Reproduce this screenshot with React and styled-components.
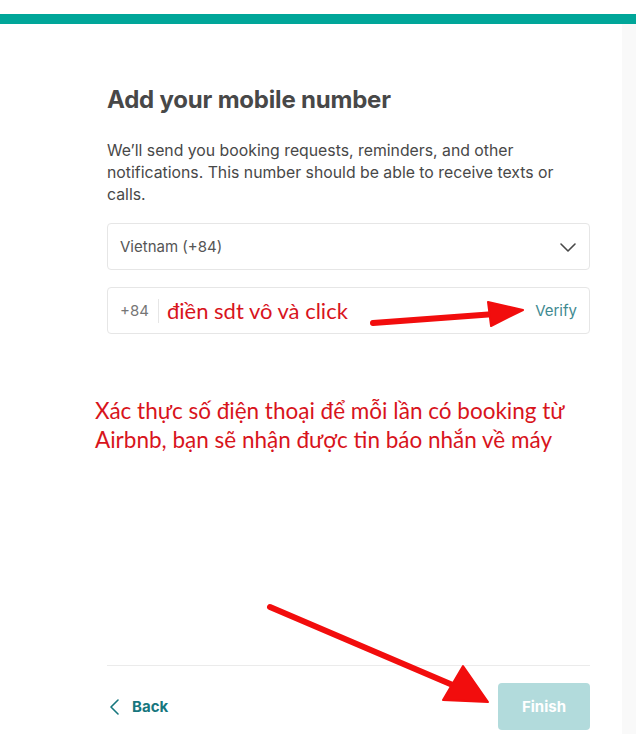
import React from 'react';
import styled, { createGlobalStyle } from 'styled-components';

const GlobalStyle = createGlobalStyle`
  html, body {
    margin: 0;
    padding: 0;
    background: #fff;
  }
  body {
    font-family: "Inter", "Noto Sans", sans-serif;
    color: #484848;
  }
`;

const Page = styled.div`
  position: relative;
  height: 734px;
  overflow: hidden;
  display: flex;
  flex-direction: column;
  padding-top: 14px;
  box-sizing: border-box;
`;

const TopBar = styled.div`
  height: 10px;
  background: #00a699;
  flex-shrink: 0;
`;

const Body = styled.div`
  flex: 1;
  display: flex;
`;

const Main = styled.main`
  flex: 1;
  display: flex;
  flex-direction: column;
  padding: 0 32px 0 107px;
`;

const SideStrip = styled.aside`
  width: 14px;
  background: #f9f9f9;
`;

const Title = styled.h1`
  margin: 62px 0 0;
  font-size: 24px;
  line-height: 28px;
  font-weight: 700;
  color: #484848;
  letter-spacing: -0.2px;
`;

const Lead = styled.p`
  margin: 26px 0 0;
  font-size: 15.8px;
  line-height: 22px;
  color: #484848;
  max-width: 470px;
`;

const Field = styled.div`
  margin-top: ${p => p.$gap}px;
  height: 47px;
  box-sizing: border-box;
  border: 1px solid #e6e6e6;
  border-radius: 4px;
  display: flex;
  align-items: center;
  padding: 0 12px;
`;

const SelectText = styled.span`
  flex: 1;
  font-size: 15px;
  color: #555;
`;

const Prefix = styled.span`
  font-size: 15px;
  color: #767676;
  padding-right: 9px;
  border-right: 1px solid #e6e6e6;
  line-height: 24px;
`;

const NoteInline = styled.span`
  flex: 1;
  padding-left: 8px;
  font-family: "Lato", "Noto Sans", sans-serif;
  font-size: 22px;
  color: #d8141c;
`;

const Verify = styled.span`
  font-size: 15px;
  color: #3f8a91;
`;

const Spacer = styled.div`
  flex: 1;
`;

const Divider = styled.hr`
  margin: 0;
  border: 0;
  border-top: 1px solid #ebebeb;
`;

const Footer = styled.footer`
  display: flex;
  align-items: center;
  justify-content: space-between;
  padding: 17px 0 4px;
`;

const BackLink = styled.a`
  display: flex;
  align-items: center;
  gap: 12px;
  padding-left: 3px;
  font-size: 15px;
  font-weight: 700;
  color: #17777e;
  text-decoration: none;
`;

const FinishButton = styled.button`
  width: 92px;
  height: 47px;
  border: 0;
  border-radius: 4px;
  background: #b2dbdc;
  color: #fff;
  font-family: inherit;
  font-size: 15px;
  font-weight: 700;
`;

const Annotation = styled.p`
  position: absolute;
  left: 95px;
  top: 396px;
  margin: 0;
  white-space: nowrap;
  font-family: "Lato", "Noto Sans", sans-serif;
  font-size: 22.5px;
  line-height: 29px;
  color: #d8141c;
`;

const Arrows = styled.svg`
  position: absolute;
  left: 0;
  top: 0;
  pointer-events: none;
`;

const Chevron = ({ size = 18 }) => (
  <svg width={size} height={size} viewBox="0 0 18 18" fill="none" stroke="#484848" strokeWidth="1.6" strokeLinecap="round" strokeLinejoin="round">
    <path d="M2 6l7 7 7-7" />
  </svg>
);

export default function App() {
  return (
    <>
      <GlobalStyle />
      <Page>
        <TopBar />
        <Body>
          <Main>
            <Title>Add your mobile number</Title>
            <Lead>
              We’ll send you booking requests, reminders, and other notifications. This number should be able to receive texts or calls.
            </Lead>
            <Field $gap={17}>
              <SelectText>Vietnam (+84)</SelectText>
              <Chevron />
            </Field>
            <Field $gap={17}>
              <Prefix>+84</Prefix>
              <NoteInline>điền sdt vô và click</NoteInline>
              <Verify>Verify</Verify>
            </Field>
            <Spacer />
            <Divider />
            <Footer>
              <BackLink href="#">
                <svg width="10" height="16" viewBox="0 0 10 16" fill="none" stroke="#17777e" strokeWidth="1.6" strokeLinecap="round" strokeLinejoin="round">
                  <path d="M8 1L1 8l7 7" />
                </svg>
                Back
              </BackLink>
              <FinishButton>Finish</FinishButton>
            </Footer>
          </Main>
          <SideStrip />
        </Body>
        <Annotation>
          Xác thực số điện thoại để mỗi lần có booking từ
          <br />
          Airbnb, bạn sẽ nhận được tin báo nhắn về máy
        </Annotation>
        <Arrows width="636" height="734" viewBox="0 0 636 734">
          <g fill="#f20d0d" stroke="#f20d0d" strokeLinecap="round" strokeLinejoin="round">
            <line x1="373" y1="323" x2="495" y2="314" strokeWidth="6" />
            <polygon points="488,302 523,310 491,326" strokeWidth="2" />
            <line x1="270" y1="607" x2="455" y2="686" strokeWidth="6" />
            <polygon points="463,666 488,702 443,700" strokeWidth="2" />
          </g>
        </Arrows>
      </Page>
    </>
  );
}
